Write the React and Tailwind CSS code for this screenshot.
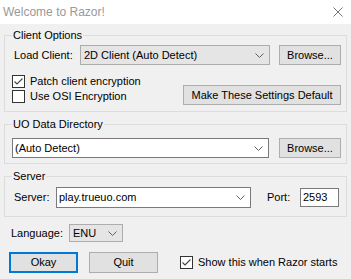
import React from "react";

const font = { fontFamily: '"Liberation Sans", Arial, sans-serif' };

function Chevron() {
  return (
    <svg width="9" height="5" viewBox="0 0 9 5" className="shrink-0">
      <polyline points="0.5,0.5 4.5,4.5 8.5,0.5" fill="none" stroke="#606060" strokeWidth="1" />
    </svg>
  );
}

function Check({ checked }) {
  return (
    <span className="w-[13px] h-[13px] border border-[#333333] bg-white flex items-center justify-center shrink-0">
      {checked && (
        <svg width="11" height="11" viewBox="0 0 11 11">
          <polyline points="1.5,5.5 4,8 9.5,2.5" fill="none" stroke="#444" strokeWidth="1.1" />
        </svg>
      )}
    </span>
  );
}

function Button({ children, className = "" }) {
  return (
    <div
      className={`h-[20px] border border-[#adadad] bg-[#e1e1e1] flex items-center justify-center text-[11px] text-black ${className}`}
    >
      {children}
    </div>
  );
}

function Group({ title, children, className = "" }) {
  return (
    <fieldset className={`mx-[4px] border border-[#dcdcdc] pl-[7px] pr-[5px] ${className}`}>
      <legend className="px-[1px] text-[11px] leading-[13px] text-black">{title}</legend>
      {children}
    </fieldset>
  );
}

export default function App() {
  return (
    <div className="w-[351px] h-[279px] bg-[#f0f0f0] overflow-hidden text-black" style={font}>
      <div className="h-[24px] bg-white flex items-center justify-between pl-[3px] pr-[8px]">
        <span className="text-[12px] text-[#999999]">Welcome to Razor!</span>
        <svg width="10" height="10" viewBox="0 0 10 10">
          <path d="M0.5 0.5 L9.5 9.5 M9.5 0.5 L0.5 9.5" stroke="#777" strokeWidth="1" />
        </svg>
      </div>

      <Group title="Client Options" className="mt-[5px] pb-[6px]">
        <div className="flex items-center mt-[3px] text-[11px]">
          <span className="w-[68px] pl-[2px]">Load Client:</span>
          <div className="w-[190px] h-[20px] border border-[#adadad] bg-[#e5e5e5] flex items-center justify-between pl-[3px] pr-[5px]">
            <span>2D Client (Auto Detect)</span>
            <Chevron />
          </div>
          <Button className="w-[62px] ml-[9px]">Browse...</Button>
        </div>
        <div className="flex items-end justify-between mt-[10px] text-[11px]">
          <div className="flex flex-col gap-[2px] pb-[2px]">
            <label className="flex items-center gap-[5px] h-[13px]">
              <Check checked />
              <span>Patch client encryption</span>
            </label>
            <label className="flex items-center gap-[5px] h-[13px]">
              <Check />
              <span>Use OSI Encryption</span>
            </label>
          </div>
          <Button className="w-[158px] h-[18px]">Make These Settings Default</Button>
        </div>
      </Group>

      <Group title="UO Data Directory" className="mt-[6px] pb-[5px]">
        <div className="flex items-center mt-[7px] text-[11px]">
          <div className="w-[257px] h-[20px] border border-[#7a7a7a] bg-white flex items-center justify-between pl-[2px] pr-[5px]">
            <span>(Auto Detect)</span>
            <Chevron />
          </div>
          <Button className="w-[62px] ml-[10px] h-[18px]">Browse...</Button>
        </div>
      </Group>

      <Group title="Server" className="mt-[6px] pb-[8px]">
        <div className="flex items-center mt-[4px] text-[11px]">
          <span className="w-[44px] pl-[2px]">Server:</span>
          <div className="w-[195px] h-[21px] border border-[#7a7a7a] bg-white flex items-center justify-between pl-[2px] pr-[5px]">
            <span>play.trueuo.com</span>
            <Chevron />
          </div>
          <span className="ml-[16px] w-[33px]">Port:</span>
          <div className="w-[39px] h-[19px] border border-[#7a7a7a] bg-white flex items-center pl-[2px]">2593</div>
        </div>
      </Group>

      <div className="flex items-center mt-[7px] pl-[11px] text-[11px]">
        <span className="w-[58px]">Language:</span>
        <div className="w-[54px] h-[18px] border border-[#adadad] bg-[#e5e5e5] flex items-center justify-between pl-[3px] pr-[5px]">
          <span>ENU</span>
          <Chevron />
        </div>
      </div>

      <div className="flex items-center mt-[10px] pl-[9px] text-[11px]">
        <div className="w-[69px] h-[21px] border-2 border-[#0078d7] bg-[#e1e1e1] flex items-center justify-center">Okay</div>
        <Button className="w-[69px] h-[21px] ml-[11px]">Quit</Button>
        <label className="flex items-center gap-[5px] ml-[22px]">
          <Check checked />
          <span>Show this when Razor starts</span>
        </label>
      </div>
    </div>
  );
}
